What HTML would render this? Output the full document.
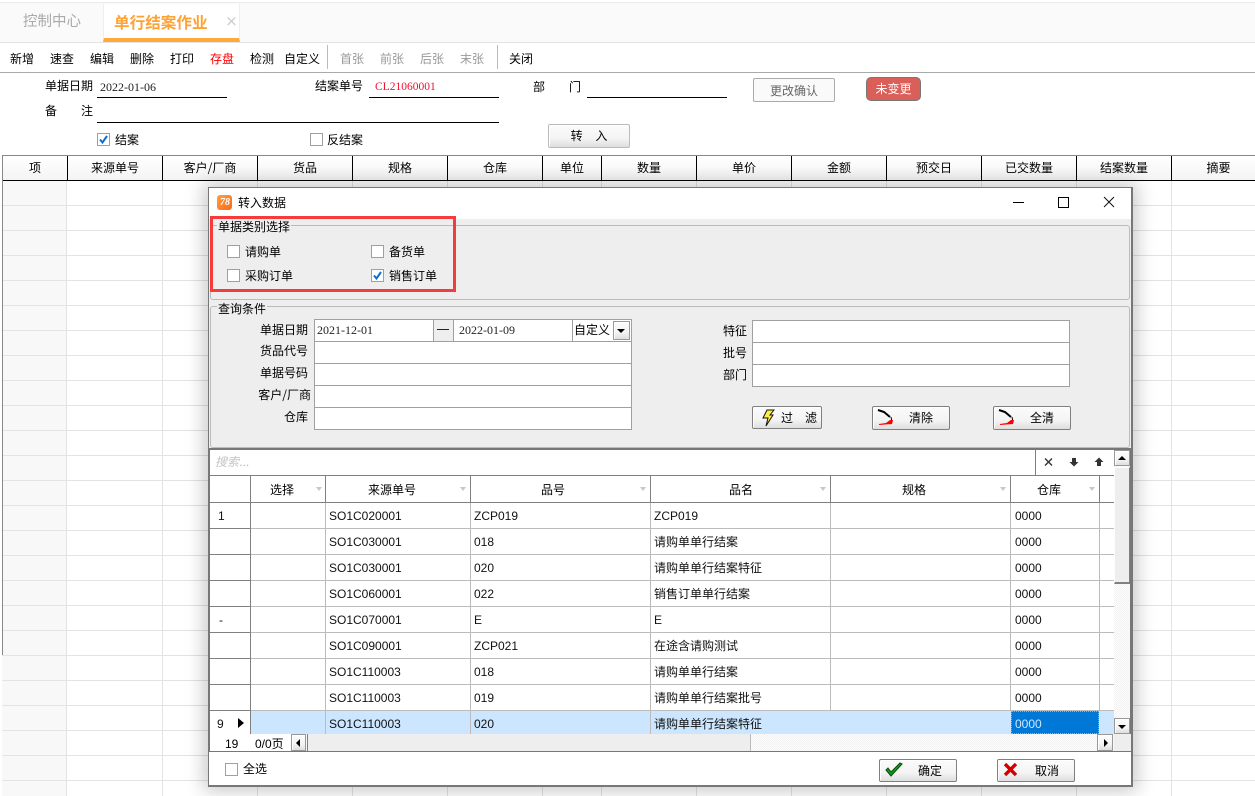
<!DOCTYPE html>
<html lang="zh"><head><meta charset="utf-8"><title>单行结案作业</title>
<style>
*{box-sizing:border-box}
html,body{margin:0;padding:0}
body{width:1255px;height:796px;overflow:hidden;position:relative;background:#fff;font:12px/14px "WenQuanYi Zen Hei","Noto Sans CJK SC",sans-serif;color:#000}
div,span,svg{position:absolute}
.t{white-space:nowrap}
.c{text-align:center}
.r{text-align:right}
.l{font-family:"Liberation Sans","WenQuanYi Zen Hei",sans-serif}
.s{font-family:"Liberation Serif",serif;color:#222}
.ln{background:#000;height:1px}
.cb{width:13px;height:13px;background:#fff;border:1px solid #a0a0a0}
.hc{top:156px;height:24px;border-right:1px solid #000;text-align:center;line-height:24px;background:linear-gradient(#fff,#f4f4f4)}
.tb{top:52px;width:40px;text-align:center}
.dim{color:#999}
.btn{border:1px solid #808080;border-radius:2px;background:linear-gradient(#fbfbfb 0,#f4f4f4 60%,#dedede);box-shadow:inset 1px 1px 0 #fff;text-align:center}
.f{background:#fff;border:1px solid #a0a0a0}
.row{left:210px;width:904px;height:26px;border-bottom:1px solid #bcbcbc;background:#fff}
.row span{top:6px;white-space:nowrap;font-family:"Liberation Sans","WenQuanYi Zen Hei",sans-serif;color:#111}
.row i{position:absolute;top:0;bottom:-1px;width:1px;background:#bcbcbc}
.rh{position:absolute;left:0;top:0;width:41px;height:26px;border-right:1px solid #808080;border-bottom:1px solid #808080;background:#fff}
.sa{width:8px;height:5px;top:487px;background:#fff}
.sa:after{content:"";position:absolute;left:1px;top:0;border:3px solid transparent;border-top:4px solid #c8c8c8;border-bottom:0}
.hd{top:483px}
</style></head><body>

<!-- tabs -->
<div style="left:0;top:2px;width:1255px;height:41px;background:#fafafa;border-top:1px solid #eaeaea;border-bottom:1px solid #e4e4e4"></div>
<div style="left:103px;top:4px;width:137px;height:38px;background:#fff;border-left:1px solid #eee;border-right:1px solid #eee;border-bottom:4px solid #ffa83c"></div>
<div class="t" style="left:23px;top:13px;font-size:14.5px;line-height:16px;color:#aaa">控制中心</div>
<div class="t" style="left:114px;top:13px;font-size:15.6px;line-height:18px;color:#ffa235;font-weight:bold">单行结案作业</div>
<div class="t" style="left:225px;top:13px;font-size:13px;line-height:16px;color:#ccc;font-weight:bold">×</div>

<!-- toolbar -->
<div style="left:0;top:72px;width:1255px;height:1px;background:#aaa"></div>
<div class="t tb" style="left:2px">新增</div><div class="t tb" style="left:42px">速查</div><div class="t tb" style="left:82px">编辑</div><div class="t tb" style="left:122px">删除</div><div class="t tb" style="left:162px">打印</div><div class="t tb" style="left:202px;color:#f00">存盘</div><div class="t tb" style="left:242px">检测</div><div class="t tb" style="left:282px">自定义</div>
<div style="left:327px;top:45px;width:1px;height:24px;background:#bbb"></div>
<div class="t tb dim" style="left:332px">首张</div><div class="t tb dim" style="left:372px">前张</div><div class="t tb dim" style="left:412px">后张</div><div class="t tb dim" style="left:452px">末张</div>
<div style="left:497px;top:45px;width:1px;height:24px;background:#bbb"></div>
<div class="t tb" style="left:501px">关闭</div>

<!-- form -->
<div class="t" style="left:45px;top:79px">单据日期</div>
<div class="t s" style="left:100px;top:80px">2022-01-06</div>
<div class="ln" style="left:97px;top:97px;width:130px"></div>
<div class="t" style="left:315px;top:79px">结案单号</div>
<div class="t s" style="left:375px;top:80px;color:#f01030;font-size:11.5px">CL21060001</div>
<div class="ln" style="left:369px;top:97px;width:130px"></div>
<div class="t" style="left:533px;top:80px">部</div><div class="t" style="left:569px;top:80px">门</div>
<div class="ln" style="left:587px;top:97px;width:140px"></div>
<div class="t c" style="left:753px;top:78px;width:82px;height:24px;line-height:23px;border:1px solid #aaa;border-radius:2px;color:#666;background:#fafafa">更改确认</div>
<div class="t c" style="left:866px;top:77px;width:55px;height:24px;line-height:22px;border:1px solid #777;border-radius:5px;color:#fff;background:#da5f59">未变更</div>
<div class="t" style="left:45px;top:104px">备</div><div class="t" style="left:81px;top:104px">注</div>
<div class="ln" style="left:97px;top:122px;width:402px"></div>
<div class="cb" style="left:97px;top:133px"><svg width="11" height="11" style="left:0;top:0"><path d="M2 5.5L4.5 8.5L9 2" fill="none" stroke="#0a6fd0" stroke-width="2"/></svg></div>
<div class="t" style="left:115px;top:133px">结案</div>
<div class="cb" style="left:310px;top:133px"></div>
<div class="t" style="left:327px;top:133px">反结案</div>
<div class="t c btn" style="left:548px;top:124px;width:82px;height:24px;line-height:22px;border-color:#bbb;letter-spacing:0;word-spacing:10px">转 入</div>

<!-- main table -->
<div style="left:2px;top:155px;width:1253px;height:2px;background:#888"></div>
<div style="left:2px;top:181px;width:1253px;height:615px;background:repeating-linear-gradient(to bottom,#fff 0,#fff 24px,#e3e3e3 24px,#e3e3e3 25px)"></div>
<div style="left:2px;top:181px;width:65px;height:615px;background:repeating-linear-gradient(to bottom,#f8f8f8 0,#f8f8f8 24px,#e3e3e3 24px,#e3e3e3 25px);border-right:1px solid #e3e3e3"></div>
<div style="left:162px;top:180px;width:1px;height:616px;background:#e3e3e3"></div><div style="left:257px;top:180px;width:1px;height:616px;background:#e3e3e3"></div><div style="left:352px;top:180px;width:1px;height:616px;background:#e3e3e3"></div><div style="left:447px;top:180px;width:1px;height:616px;background:#e3e3e3"></div><div style="left:542px;top:180px;width:1px;height:616px;background:#e3e3e3"></div><div style="left:601px;top:180px;width:1px;height:616px;background:#e3e3e3"></div><div style="left:696px;top:180px;width:1px;height:616px;background:#e3e3e3"></div><div style="left:791px;top:180px;width:1px;height:616px;background:#e3e3e3"></div><div style="left:886px;top:180px;width:1px;height:616px;background:#e3e3e3"></div><div style="left:981px;top:180px;width:1px;height:616px;background:#e3e3e3"></div><div style="left:1076px;top:180px;width:1px;height:616px;background:#e3e3e3"></div><div style="left:1171px;top:180px;width:1px;height:616px;background:#e3e3e3"></div>
<div style="left:2px;top:155px;width:1px;height:500px;background:#888"></div>
<div class="hc" style="left:3px;width:65px">项</div><div class="hc" style="left:68px;width:95px">来源单号</div><div class="hc" style="left:163px;width:95px">客户/厂商</div><div class="hc" style="left:258px;width:95px">货品</div><div class="hc" style="left:353px;width:95px">规格</div><div class="hc" style="left:448px;width:95px">仓库</div><div class="hc" style="left:543px;width:59px">单位</div><div class="hc" style="left:602px;width:95px">数量</div><div class="hc" style="left:697px;width:95px">单价</div><div class="hc" style="left:792px;width:95px">金额</div><div class="hc" style="left:887px;width:95px">预交日</div><div class="hc" style="left:982px;width:95px">已交数量</div><div class="hc" style="left:1077px;width:95px">结案数量</div><div class="hc" style="left:1172px;width:93px;border-right:0">摘要</div>
<div style="left:3px;top:180px;width:1252px;height:1px;background:#000"></div>

<!-- dialog -->
<div style="left:208px;top:187px;width:925px;height:600px;background:#fff;border:1px solid #777;border-right:2px solid #777;border-bottom:2px solid #777;box-shadow:0 0 18px 4px rgba(0,0,0,.22)"></div>
<div style="left:217px;top:195px;width:15px;height:15px;border-radius:3px;background:linear-gradient(135deg,#ffa040,#f86a1c)"></div>
<div class="t" style="left:218px;top:196px;width:14px;text-align:center;color:#fff;font:italic bold 10px/13px 'Liberation Serif',serif">78</div>
<div class="t" style="left:238px;top:196px">转入数据</div>
<div style="left:1013px;top:202px;width:11px;height:1px;background:#000"></div>
<div style="left:1058px;top:197px;width:11px;height:11px;border:1px solid #000"></div>
<svg width="12" height="12" style="left:1103px;top:196px"><path d="M1 1L11 11M11 1L1 11" stroke="#111" fill="none" stroke-width="1"/></svg>

<div style="left:209px;top:219px;width:922px;height:231px;background:#eee"></div>
<div style="left:1131px;top:219px;width:1px;height:532px;background:#777"></div>

<!-- group 1 -->
<div style="left:210px;top:225px;width:920px;height:75px;border:1px solid #bbb;border-radius:3px"></div>
<div class="t" style="left:217px;top:220px;background:#eee;padding:0 1px">单据类别选择</div>
<div class="cb" style="left:227px;top:245px"></div><div class="t" style="left:245px;top:245px">请购单</div>
<div class="cb" style="left:371px;top:245px"></div><div class="t" style="left:389px;top:245px">备货单</div>
<div class="cb" style="left:227px;top:269px"></div><div class="t" style="left:245px;top:269px">采购订单</div>
<div class="cb" style="left:371px;top:269px"><svg width="11" height="11" style="left:0;top:0"><path d="M2 5.5L4.5 8.5L9 2" fill="none" stroke="#0a6fd0" stroke-width="2"/></svg></div><div class="t" style="left:389px;top:269px">销售订单</div>
<div style="left:210px;top:216px;width:246px;height:76px;border:3px solid #f43c3c"></div>

<!-- group 2 -->
<div style="left:210px;top:306px;width:920px;height:142px;border:1px solid #bbb;border-radius:3px"></div>
<div class="t" style="left:217px;top:302px;background:#eee;padding:0 1px">查询条件</div>
<div class="t r" style="left:240px;top:323px;width:68px">单据日期</div>
<div class="t r" style="left:240px;top:344px;width:68px">货品代号</div>
<div class="t r" style="left:240px;top:366px;width:68px">单据号码</div>
<div class="t r" style="left:240px;top:388px;width:71px">客户/厂商</div>
<div class="t r" style="left:240px;top:410px;width:68px">仓库</div>
<div class="f" style="left:314px;top:319px;width:120px;height:23px"></div>
<div class="t s" style="left:317px;top:323px">2021-12-01</div>
<div style="left:434px;top:319px;width:20px;height:23px;border-top:1px solid #a0a0a0;border-bottom:1px solid #a0a0a0"></div>
<div style="left:437px;top:329px;width:12px;height:1px;background:#222"></div>
<div class="f" style="left:453px;top:319px;width:120px;height:23px"></div>
<div class="t s" style="left:459px;top:323px">2022-01-09</div>
<div class="f" style="left:572px;top:319px;width:60px;height:23px"></div>
<div class="t" style="left:574px;top:323px">自定义</div>
<div class="btn" style="left:613px;top:321px;width:17px;height:19px;border-radius:0;border-color:#999"><div style="left:3px;top:7px;width:0;height:0;border:4px solid transparent;border-top:4px solid #000;border-bottom:0"></div></div>
<div class="f" style="left:314px;top:341px;width:318px;height:23px"></div>
<div class="f" style="left:314px;top:363px;width:318px;height:23px"></div>
<div class="f" style="left:314px;top:385px;width:318px;height:23px"></div>
<div class="f" style="left:314px;top:407px;width:318px;height:23px"></div>
<div class="t r" style="left:700px;top:324px;width:47px">特征</div>
<div class="t r" style="left:700px;top:346px;width:47px">批号</div>
<div class="t r" style="left:700px;top:368px;width:47px">部门</div>
<div class="f" style="left:752px;top:320px;width:318px;height:23px"></div>
<div class="f" style="left:752px;top:342px;width:318px;height:23px"></div>
<div class="f" style="left:752px;top:364px;width:318px;height:23px"></div>

<div class="btn" style="left:752px;top:406px;width:70px;height:23px"></div>
<svg width="14" height="18" style="left:761px;top:409px"><path d="M6 1L13 1L9 6L12 6L5 17L7 9L2 9Z" fill="#ffee44" stroke="#111" stroke-width="1"/></svg>
<div class="t" style="left:781px;top:411px">过</div><div class="t" style="left:805px;top:411px">滤</div>
<div class="btn" style="left:872px;top:406px;width:78px;height:24px"></div>
<svg width="18" height="18" style="left:877px;top:409px"><path d="M1 1L7 3L13 8" fill="none" stroke="#000" stroke-width="2"/><path d="M14 8L15 13L13 15" fill="none" stroke="#000" stroke-width="1"/><path d="M13 11L16 11L15 15L2 16L2 15L9 14Z" fill="#f00"/></svg>
<div class="t" style="left:909px;top:411px">清除</div>
<div class="btn" style="left:993px;top:406px;width:78px;height:24px"></div>
<svg width="18" height="18" style="left:998px;top:409px"><path d="M1 1L7 3L13 8" fill="none" stroke="#000" stroke-width="2"/><path d="M14 8L15 13L13 15" fill="none" stroke="#000" stroke-width="1"/><path d="M13 11L16 11L15 15L2 16L2 15L9 14Z" fill="#f00"/></svg>
<div class="t" style="left:1030px;top:411px">全清</div>

<!-- grid -->
<div style="left:209px;top:448px;width:922px;height:2px;background:#777"></div>
<div style="left:209px;top:450px;width:905px;height:26px;background:#fff;border-left:1px solid #777;border-bottom:1px solid #808080"></div>
<div class="t" style="left:215px;top:455px;color:#c4c4c4;font-style:italic">搜索...</div>
<div style="left:1035px;top:450px;width:1px;height:25px;background:#808080"></div>
<svg width="80" height="14" style="left:1041px;top:455px"><path d="M4 3.5L11 10.5M11 3.5L4 10.5" stroke="#333" stroke-width="1.4" fill="none"/><path d="M31 3H35V7H37.5L33 11.5L28.5 7H31Z" fill="#333"/><path d="M56 11H60V7H62.5L58 2.5L53.5 7H56Z" fill="#333"/></svg>

<div style="left:210px;top:476px;width:904px;height:27px;background:#fff;border-bottom:1px solid #808080"></div>
<div style="left:250px;top:476px;width:1px;height:27px;background:#808080"></div><div style="left:325px;top:476px;width:1px;height:27px;background:#808080"></div><div style="left:470px;top:476px;width:1px;height:27px;background:#808080"></div><div style="left:650px;top:476px;width:1px;height:27px;background:#808080"></div><div style="left:830px;top:476px;width:1px;height:27px;background:#808080"></div><div style="left:1010px;top:476px;width:1px;height:27px;background:#808080"></div><div style="left:1099px;top:476px;width:1px;height:27px;background:#808080"></div>
<div class="t hd" style="left:270px">选择</div><div class="t hd" style="left:368px">来源单号</div><div class="t hd" style="left:541px">品号</div><div class="t hd" style="left:729px">品名</div><div class="t hd" style="left:902px">规格</div><div class="t hd" style="left:1037px">仓库</div>
<div class="sa" style="left:315px"></div><div class="sa" style="left:459px"></div><div class="sa" style="left:639px"></div><div class="sa" style="left:819px"></div><div class="sa" style="left:999px"></div><div class="sa" style="left:1088px"></div>

<div class="row" style="top:503px"><div class="rh"></div><i style="left:115px"></i><i style="left:260px"></i><i style="left:440px"></i><i style="left:620px"></i><i style="left:800px"></i><i style="left:889px"></i><span style="left:8px">1</span><span style="left:119px">SO1C020001</span><span style="left:264px">ZCP019</span><span style="left:444px">ZCP019</span><span style="left:805px">0000</span></div>
<div class="row" style="top:529px"><div class="rh"></div><i style="left:115px"></i><i style="left:260px"></i><i style="left:440px"></i><i style="left:620px"></i><i style="left:800px"></i><i style="left:889px"></i><span style="left:119px">SO1C030001</span><span style="left:264px">018</span><span style="left:444px">请购单单行结案</span><span style="left:805px">0000</span></div>
<div class="row" style="top:555px"><div class="rh"></div><i style="left:115px"></i><i style="left:260px"></i><i style="left:440px"></i><i style="left:620px"></i><i style="left:800px"></i><i style="left:889px"></i><span style="left:119px">SO1C030001</span><span style="left:264px">020</span><span style="left:444px">请购单单行结案特征</span><span style="left:805px">0000</span></div>
<div class="row" style="top:581px"><div class="rh"></div><i style="left:115px"></i><i style="left:260px"></i><i style="left:440px"></i><i style="left:620px"></i><i style="left:800px"></i><i style="left:889px"></i><span style="left:119px">SO1C060001</span><span style="left:264px">022</span><span style="left:444px">销售订单单行结案</span><span style="left:805px">0000</span></div>
<div class="row" style="top:607px"><div class="rh"></div><i style="left:115px"></i><i style="left:260px"></i><i style="left:440px"></i><i style="left:620px"></i><i style="left:800px"></i><i style="left:889px"></i><span style="left:9px">-</span><span style="left:119px">SO1C070001</span><span style="left:264px">E</span><span style="left:444px">E</span><span style="left:805px">0000</span></div>
<div class="row" style="top:633px"><div class="rh"></div><i style="left:115px"></i><i style="left:260px"></i><i style="left:440px"></i><i style="left:620px"></i><i style="left:800px"></i><i style="left:889px"></i><span style="left:119px">SO1C090001</span><span style="left:264px">ZCP021</span><span style="left:444px">在途含请购测试</span><span style="left:805px">0000</span></div>
<div class="row" style="top:659px"><div class="rh"></div><i style="left:115px"></i><i style="left:260px"></i><i style="left:440px"></i><i style="left:620px"></i><i style="left:800px"></i><i style="left:889px"></i><span style="left:119px">SO1C110003</span><span style="left:264px">018</span><span style="left:444px">请购单单行结案</span><span style="left:805px">0000</span></div>
<div class="row" style="top:685px"><div class="rh"></div><i style="left:115px"></i><i style="left:260px"></i><i style="left:440px"></i><i style="left:620px"></i><i style="left:800px"></i><i style="left:889px"></i><span style="left:119px">SO1C110003</span><span style="left:264px">019</span><span style="left:444px">请购单单行结案批号</span><span style="left:805px">0000</span></div>
<div class="row" style="top:711px;height:23px;border-bottom:0;background:#cce6ff"><div class="rh" style="height:23px;border-bottom:0"></div><i style="left:115px;bottom:0"></i><i style="left:260px;bottom:0"></i><i style="left:440px;bottom:0"></i><span style="left:7px">9</span><div style="left:28px;top:7px;width:0;height:0;border:5.5px solid transparent;border-left:6px solid #000;border-right:0"></div><span style="left:119px">SO1C110003</span><span style="left:264px">020</span><span style="left:444px">请购单单行结案特征</span></div>
<div class="t" style="left:1011px;top:711px;width:88px;height:23px;background:#0078d7;outline:1px dotted #f0a040;outline-offset:-1px;color:#cfe6ff;font-family:'Liberation Sans';line-height:26px;padding-left:4px">0000</div>
<div style="left:209px;top:450px;width:1px;height:301px;background:#777"></div>

<!-- v scrollbar -->
<div style="left:1114px;top:450px;width:16px;height:284px;background:#f8f8f8 repeating-conic-gradient(#fff 0 25%,#f0f0f0 0 50%) 0 0/2px 2px"></div>
<div style="left:1130px;top:450px;width:2px;height:284px;background:#777"></div>
<div class="btn" style="left:1114px;top:450px;width:16px;height:16px;border-radius:0;border-color:#999"><div style="left:3px;top:5px;width:0;height:0;border:4px solid transparent;border-bottom:4px solid #000;border-top:0"></div></div>
<div style="left:1114px;top:467px;width:16px;height:117px;background:#eee;border:1px solid #fff;border-right:1px solid #808080;border-bottom:2px solid #808080"></div>
<div class="btn" style="left:1114px;top:718px;width:16px;height:16px;border-radius:0;border-color:#999"><div style="left:3px;top:6px;width:0;height:0;border:4px solid transparent;border-top:4px solid #000;border-bottom:0"></div></div>

<!-- h scrollbar -->
<div style="left:210px;top:734px;width:921px;height:17px;background:#f8f8f8 repeating-conic-gradient(#fff 0 25%,#f0f0f0 0 50%) 0 0/2px 2px"></div>
<div style="left:210px;top:734px;width:81px;height:17px;background:#fff"></div>
<div class="t l" style="left:225px;top:737px">19</div>
<div class="t l" style="left:255px;top:737px">0/0页</div>
<div class="btn" style="left:291px;top:734px;width:15px;height:17px;border-radius:0;border-color:#999"><div style="left:4px;top:4px;width:0;height:0;border:4px solid transparent;border-right:4px solid #000;border-left:0"></div></div>
<div style="left:307px;top:734px;width:444px;height:17px;background:#eee;border-left:1px solid #808080;border-right:1px solid #bbb"></div>
<div class="btn" style="left:1097px;top:734px;width:16px;height:17px;border-radius:0;border-color:#999"><div style="left:6px;top:4px;width:0;height:0;border:4px solid transparent;border-left:4px solid #000;border-right:0"></div></div>
<div style="left:1114px;top:734px;width:17px;height:17px;background:#eee"></div>
<div style="left:209px;top:751px;width:923px;height:1px;background:#777"></div>

<!-- footer -->
<div class="cb" style="left:225px;top:763px"></div>
<div class="t" style="left:243px;top:762px">全选</div>
<div class="btn" style="left:879px;top:759px;width:78px;height:23px"></div>
<svg width="18" height="16" style="left:885px;top:762px"><path d="M1 8L6 14L17 2L15 1L6 10L3 6Z" fill="#1a9a1a" stroke="#064a10" stroke-width="1"/></svg>
<div class="t" style="left:918px;top:764px">确定</div>
<div class="btn" style="left:997px;top:759px;width:78px;height:23px"></div>
<svg width="15" height="14" style="left:1003px;top:763px"><path d="M2 1L13 12M13 1L2 12" stroke="#d40000" stroke-width="3.4" fill="none"/></svg>
<div class="t" style="left:1035px;top:764px">取消</div>
</body></html>
